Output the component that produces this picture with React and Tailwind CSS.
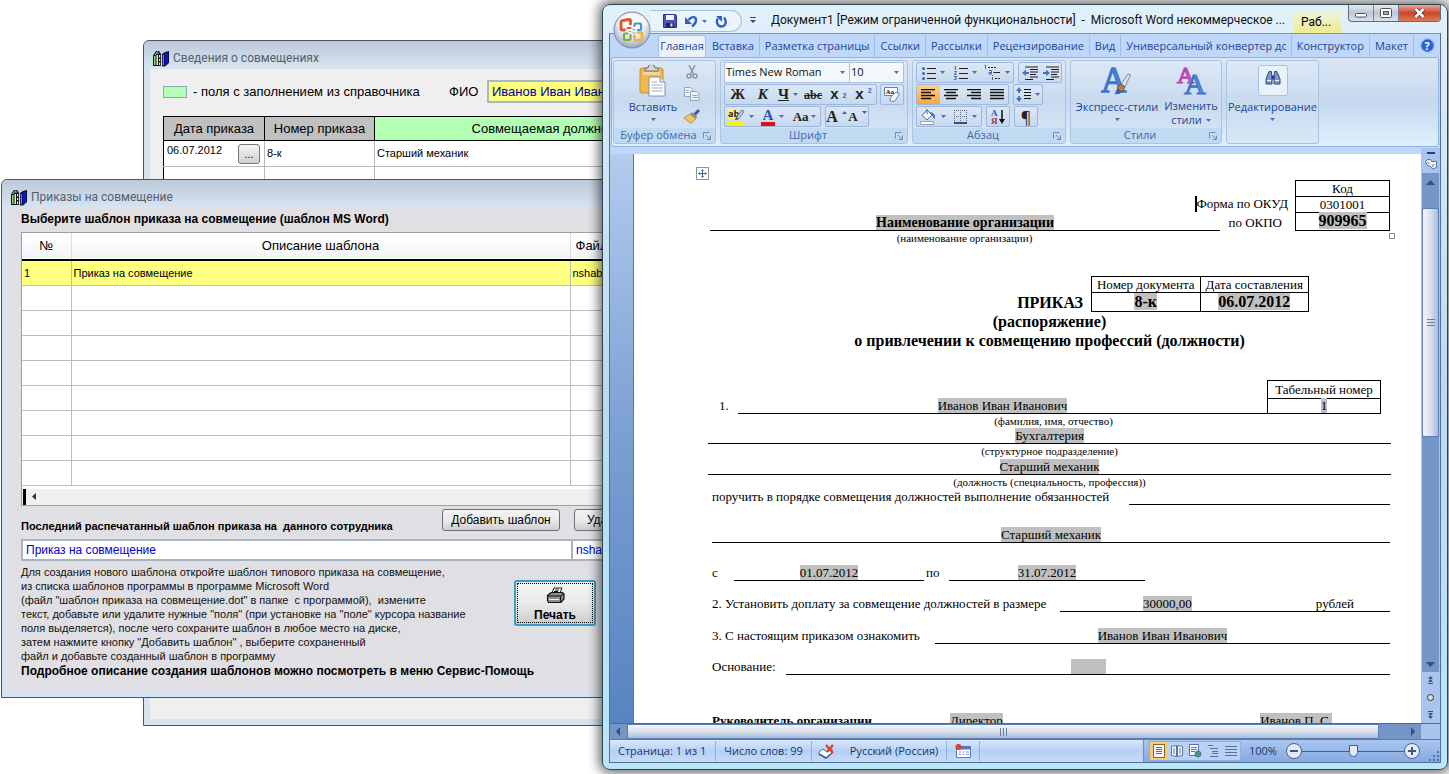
import clsx from "clsx";

const ui = "font-['Open_Sans','Noto_Sans',sans-serif]";
const caption = "font-[Roboto,'Noto_Sans',sans-serif]";
const arial = "font-['Liberation_Sans',Arial,sans-serif]";
const times = "font-['Liberation_Serif','Times_New_Roman',serif]";

const tabs = [
  "Вставка",
  "Разметка страницы",
  "Ссылки",
  "Рассылки",
  "Рецензирование",
  "Вид",
];

const help = [
  "Для создания нового шаблона откройте шаблон типового приказа на совмещение,",
  "из списка шаблонов программы в программе Microsoft Word",
  '(файл "шаблон приказа на совмещение.dot" в папке  с программой),  измените',
  'текст, добавьте или удалите нужные "поля" (при установке на "поле" курсора название',
  "поля выделяется), после чего сохраните шаблон в любое место на диске,",
  'затем нажмите кнопку "Добавить шаблон" , выберите сохраненный',
  "файл и добавьте созданный шаблон в программу",
];

/* ---------- icons ---------- */

function BooksIcon() {
  return (
    <svg width="17" height="17" viewBox="0 0 17 17">
      <path d="M1 5.500L4 1h3l2 3v12H1z" fill="#111" />
      <path d="M2 6h1.500v9H2z" fill="#7fe08a" />
      <path d="M4.500 5H6v10H4.500z" fill="#f5ef7a" />
      <path d="M7 5h1.200v2.500H7zM7 9h1.200v2H7zM7 12.500h1.200V15H7z" fill="#dfe9ff" />
      <path d="M3 5l2.500-3.500M6 4V2" stroke="#7fe0e0" strokeWidth="1" />
      <path d="M10 4l3-2 4-1v12l-4 3.500h-3z" fill="#0a0a3a" />
      <path d="M10.800 5H12v10.500h-1.200z" fill="#5d8cf0" />
      <path d="M12.800 3.500L16 2.200v10l-3.200 3z" fill="#0d12d8" />
    </svg>
  );
}

function Caret({ className = "" }) {
  return (
    <svg width="5" height="3" viewBox="0 0 5 3" className={clsx("shrink-0", className)}>
      <path d="M0 0h5L2.500 3z" fill="#4a6fae" />
    </svg>
  );
}

function OfficeLogo() {
  return (
    <svg width="38" height="38" viewBox="0 0 38 38">
      <defs>
        <radialGradient id="orb" cx="50%" cy="35%" r="65%">
          <stop offset="0" stopColor="#ffffff" />
          <stop offset="0.6" stopColor="#e2e6ef" />
          <stop offset="1" stopColor="#98a5bd" />
        </radialGradient>
      </defs>
      <circle cx="19" cy="19" r="18" fill="url(#orb)" stroke="#7b8aa6" />
      <path d="M3 14a17 17 0 0 1 32 0q-16 8-32 0z" fill="#fff" opacity="0.5" />
      <g fill="none" strokeLinejoin="round" strokeLinecap="round">
        <path d="M11.500 19H9.200q-1.200 0-1.200-1.200v-7q0-1.100 1-1.200L16 8.500q1.500 0 1.500 1.500v3" stroke="#e0562a" strokeWidth="2.800" />
        <path d="M14.500 17h3" stroke="#e0562a" strokeWidth="2.200" />
        <path d="M21.500 15v-1.500q0-1 1-1h4.500q1 0 1 1V18q0 1-1 1h-2" stroke="#3c9ad6" strokeWidth="2.200" />
        <path d="M17.500 24v4q0 1-1 1H12q-1 0-1-1v-4.500q0-1 1-1h2.500" stroke="#6fb23c" strokeWidth="2.200" />
        <path d="M25 21.500h2.800q1.200 0 1.200 1.200v5q0 1-1 1.200l-4.800.6q-1.700.2-1.700-1.300V25" stroke="#f0b52a" strokeWidth="2.600" />
        <path d="M20 18.500h2M20 22h2M17.500 20.500h-1" stroke="#8a8fa0" strokeWidth="1" />
      </g>
    </svg>
  );
}

function SaveIcon() {
  return (
    <svg width="14" height="14" viewBox="0 0 14 14">
      <path d="M.5.5h12l1 1v12H.5z" fill="#4a53b8" stroke="#2c3488" />
      <path d="M3 1h8v5H3z" fill="#eef2fb" />
      <path d="M3 9h8v4.500H3z" fill="#20285c" />
      <path d="M7.500 9.500h2v3h-2z" fill="#e4e8f5" />
    </svg>
  );
}

function UndoIcon() {
  return (
    <svg width="13" height="13" viewBox="0 0 13 13">
      <path d="M3.500 5C6 1.500 10.500 1 11 4.500c.2 3-1.500 5-4 7" fill="none" stroke="#2f5fc4" strokeWidth="2.400" />
      <path d="M0 2v7h7z" fill="#2f5fc4" />
    </svg>
  );
}

function RedoIcon() {
  return (
    <svg width="13" height="13" viewBox="0 0 13 13">
      <path d="M3 3.500C.8 6 2 11.500 6.500 11.500S12 6 9 2.500" fill="none" stroke="#2f62c8" strokeWidth="2.400" />
      <path d="M1 1h6v6z" fill="#2f62c8" />
    </svg>
  );
}

function PasteIcon() {
  return (
    <svg width="28" height="32" viewBox="0 0 28 32">
      <rect x="1" y="3" width="23" height="25" rx="2" fill="#f0b850" stroke="#c98f33" />
      <path d="M6 6V3h3a3.500 3.500 0 0 1 7 0h3v3z" fill="#d8d8d8" stroke="#6d6d6d" />
      <path d="M4 7h17v3H4z" fill="#f9d58d" />
      <path d="M10 12h11l5 5v14H10z" fill="#fff" stroke="#8291ad" />
      <path d="M21 12v5h5" fill="#dfe7f5" stroke="#8291ad" />
      <path d="M12.500 17h6M12.500 20h11M12.500 23h11M12.500 26h11" stroke="#9eabc4" />
    </svg>
  );
}

function ScissorsIcon() {
  return (
    <svg width="12" height="14" viewBox="0 0 12 14" fill="none" stroke="#8796ae" strokeWidth="1.500">
      <path d="M3 0l4.500 9M9 0L4.500 9" />
      <circle cx="3" cy="11" r="2" />
      <circle cx="9" cy="11" r="2" />
    </svg>
  );
}

function CopyIcon() {
  return (
    <svg width="16" height="14" viewBox="0 0 16 14" fill="#eef2f8" stroke="#94a4be">
      <path d="M.5.5h6l2 2v7h-8z" />
      <path d="M6.500 4.500h6l2.500 2.500v6.500H6.500z" />
      <path d="M2 3.500h3M2 5.500h3M8.500 8.500h5M8.500 10.500h5" />
    </svg>
  );
}

function BrushIcon() {
  return (
    <svg width="16" height="15" viewBox="0 0 16 15">
      <path d="M9 5l5-5 2 2-4.500 5z" fill="#4c5a9c" />
      <path d="M6 5l2-2 5.500 5-2 2z" fill="#8c8fa0" />
      <path d="M0 9l6-4 5.500 5-4.500 4.500z" fill="#edc75a" stroke="#a87b20" strokeWidth="0.7" />
    </svg>
  );
}

function EraserIcon() {
  return (
    <svg width="18" height="17" viewBox="0 0 18 17">
      <path d="M1.500 1.500h13v8h-13z" fill="#fff" stroke="#6f7f9c" />
      <text x="2.500" y="8" fontSize="7" fontWeight="bold" fill="#222">Aa</text>
      <path d="M7 12l6-6 3.500 2-5 7.500-4-.5z" fill="#f4f6fb" stroke="#6c82ab" />
    </svg>
  );
}

function HighlightIcon() {
  return (
    <svg width="17" height="18" viewBox="0 0 17 18" className={ui}>
      <path d="M0 1h9v10H0z" fill="#fff27a" />
      <text x="0" y="9" fontSize="9" fill="#222">ab</text>
      <path d="M8 10l6-8 2 1.500-6 8z" fill="#c8d4e8" stroke="#5c6f94" />
      <path d="M7 12l1-3 2.500 2z" fill="#404040" />
      <path d="M0 13.500h16v4H0z" fill="#f6f600" />
    </svg>
  );
}

function ListIcon({ kind }) {
  return (
    <svg width="14" height="14" viewBox="0 0 14 14">
      {kind === "bullets" && (
        <g fill="#3f66b0">
          <circle cx="1.500" cy="2.500" r="1.500" />
          <circle cx="1.500" cy="7.500" r="1.500" />
          <circle cx="1.500" cy="12.500" r="1.500" />
        </g>
      )}
      {kind === "numbers" && (
        <path d="M.5.500h1V4M.5 5.500h2L.5 8.500h2M0 10.500h2.500l-1 1.500 1 .5-.5 1H0" fill="none" stroke="#3f66b0" />
      )}
      <path d="M5 2.500h9M5 7.500h9M5 12.500h9" stroke="#222" />
    </svg>
  );
}

function MultiListIcon() {
  return (
    <svg width="17" height="15" viewBox="0 0 17 15">
      <path d="M.5.500h1V4M5 5.500h2.500v3.500H5V7.500h2.500M8.500 10v1M8.500 12v3" fill="none" stroke="#3f66b0" />
      <path d="M4 2.500h2M7 2.500h2M10 2.500h2M9.500 7.500H16M11 13.500h2M14 13.500h2" stroke="#222" />
    </svg>
  );
}

function IndentIcon({ flip }) {
  return (
    <svg width="16" height="14" viewBox="0 0 16 14">
      <path d="M3 1h13M8 3.500h8M8 6h8M8 8.500h6M8 11h8M3 13.500h8" stroke="#1c1c1c" />
      <path d={flip ? "M0 6h3V3.500L7 7 3 10V8H0z" : "M7 6H4V3.500L0 7l4 3V8h3z"} fill="#4573c4" />
    </svg>
  );
}

const alignPaths = {
  left: "M0 .5h14M0 3.500h10M0 6.500h14M0 9.500h10",
  center: "M0 .5h14M2 3.500h10M0 6.500h14M2 9.500h10",
  right: "M0 .5h14M4 3.500h10M0 6.500h14M4 9.500h10",
  justify: "M0 .5h14M0 3.500h14M0 6.500h14M0 9.500h14",
};

function AlignIcon({ kind }) {
  return (
    <svg width="14" height="11" viewBox="0 0 14 11">
      <path d={alignPaths[kind]} stroke="#111" strokeWidth="1.300" />
    </svg>
  );
}

function SpacingIcon() {
  return (
    <svg width="15" height="15" viewBox="0 0 15 15">
      <path d="M3 0l3 4H4v2H2V4H0zM3 15l-3-4h2V9h2v2h2z" fill="#4573c4" />
      <path d="M8 2.500h7M8 5.500h7M8 8.500h7M8 11.500h7" stroke="#111" />
    </svg>
  );
}

function BucketIcon() {
  return (
    <svg width="17" height="16" viewBox="0 0 17 16">
      <path d="M2 6.500L7 1l5 5-5 5z" fill="#f1f4fa" stroke="#4f6a9c" />
      <path d="M7 0v5" stroke="#4f6a9c" />
      <path d="M10 3q6 1 5 7-2-1-3-4z" fill="#3f6dc0" />
      <path d="M.5 12.500h13v3H.5z" fill="#fff" stroke="#8fa2c4" />
    </svg>
  );
}

function BordersIcon() {
  return (
    <svg width="14" height="14" viewBox="0 0 14 14">
      <path d="M.5 0v13M6.500 0v13M12.500 0v13M0 .5h13M0 6.500h13" stroke="#60728f" strokeDasharray="1 1" />
      <path d="M0 13h13" stroke="#222" strokeWidth="1.500" />
    </svg>
  );
}

function SortIcon() {
  return (
    <svg width="16" height="16" viewBox="0 0 16 16" className={times}>
      <text x="1" y="7" fontSize="9" fontWeight="bold" fill="#3059ae">А</text>
      <text x="1" y="15" fontSize="9" fontWeight="bold" fill="#a8323a">Я</text>
      <path d="M12 1v11" stroke="#111" strokeWidth="1.500" />
      <path d="M9 10h6l-3 5z" fill="#111" />
    </svg>
  );
}

function QuickStylesIcon() {
  return (
    <svg width="32" height="32" viewBox="0 0 32 32" className={times}>
      <text x="0" y="27" fontSize="35" fill="#4b86d6" stroke="#3a74c6" strokeWidth="1.300">A</text>
      <path d="M20 19l7-10 2.500 1-5.500 12z" fill="#dcdfe6" stroke="#6e7384" strokeWidth="0.8" />
      <path d="M16 23l4-4 4 3-3 5z" fill="#b08048" stroke="#6b4520" strokeWidth="0.8" />
      <path d="M13 29q3-1 3-6l5 4q-3 3-8 2z" fill="#2f66b4" />
    </svg>
  );
}

function ChangeStylesIcon() {
  return (
    <svg width="32" height="32" viewBox="0 0 32 32" className={times}>
      <text x="2" y="18" fontSize="24" fill="#c95cc0" stroke="#b944ac" strokeWidth="1.200">A</text>
      <text x="9" y="29" fontSize="30" fill="#5b93dd" stroke="#3a74c6" strokeWidth="1.200">A</text>
    </svg>
  );
}

function BinocularsIcon() {
  return (
    <svg width="16" height="15" viewBox="0 0 16 15" fill="#7d97c8" stroke="#27407c" strokeWidth="0.9">
      <path d="M4 1.500h2.500V4L7 6v8H1V9l2-5zM9.500 1.500H12V4l1 0 2 5v5H9V6z" />
      <path d="M7 6h2v3H7z" fill="#27407c" />
      <path d="M2 10.500h4M10 10.500h4" stroke="#fff" strokeWidth="1.200" />
    </svg>
  );
}

function PrinterIcon() {
  return (
    <svg width="19" height="17" viewBox="0 0 19 17">
      <path d="M6 6l2-5h8l-2 5z" fill="#fff" stroke="#111" />
      <path d="M9 3h4M8 4.500h4" stroke="#111" />
      <path d="M1.500 8.500L5 5.500h11.500L18 7v5l-3 3.500H2.500l-1-2z" fill="#8c8c8c" stroke="#111" strokeWidth="1.200" />
      <path d="M2 9h12.500L18 6.500M14.500 9v6" fill="none" stroke="#111" />
      <path d="M3 12.500h10" stroke="#eee" />
    </svg>
  );
}

function LauncherIcon() {
  return (
    <svg width="8" height="8" viewBox="0 0 8 8" fill="none" stroke="#6d8cc0">
      <path d="M.5 6.500v-6h6M3 3l4 4M7.500 3.500v4h-4" />
    </svg>
  );
}

function HelpIcon() {
  return (
    <svg width="15" height="15" viewBox="0 0 15 15">
      <circle cx="7.500" cy="7.500" r="6.800" fill="#2866cf" stroke="#a5c2ee" strokeWidth="1.300" />
      <text x="4.500" y="11.500" fontSize="11" fontWeight="bold" fill="#fff">?</text>
    </svg>
  );
}

function SpellIcon() {
  return (
    <svg width="18" height="16" viewBox="0 0 18 16">
      <path d="M1 9l4-3 4 3 5-3v4l-6 5-7-4z" fill="#fff" stroke="#4b6aa8" />
      <path d="M1 11l7 4 6-5" fill="none" stroke="#3c5ca4" strokeWidth="1.500" />
      <path d="M8 2l7 8M15 2L9 9" stroke="#e0402a" strokeWidth="2.200" />
    </svg>
  );
}

function MacroIcon() {
  return (
    <svg width="16" height="14" viewBox="0 0 16 14">
      <path d="M1.500 2.500h14v11h-14z" fill="#fff" stroke="#5b79b4" />
      <path d="M2 3h13v2.500H2z" fill="#4a78cc" />
      <path d="M4 8h2M7.500 8h2M11 8h3M4 10.500h2M7.500 10.500h2M11 10.500h3" stroke="#7c93bd" />
      <circle cx="3.500" cy="3" r="3" fill="#d9432c" />
    </svg>
  );
}

/* ---------- program windows on the left ---------- */

function FormWindow({ title, className, bodyClass, children }) {
  return (
    <section
      className={clsx(
        "absolute flex flex-col rounded-t-md border border-[#4c5560] bg-[#d6e3f0] px-[6px] pb-[6px]",
        className
      )}
    >
      <header className={clsx("-mx-[6px] flex h-7 shrink-0 items-center gap-1 rounded-t-md bg-linear-to-b from-[#bccad9] to-[#d7e4f2] px-2 pt-[6px] text-[12px] text-[#56606b]", caption)}>
        <BooksIcon />
        <h2>{title}</h2>
      </header>
      <div className={clsx("min-h-0 flex-1", arial, bodyClass)}>{children}</div>
    </section>
  );
}

function CombinationsWindow() {
  return (
    <FormWindow
      title="Сведения о совмещениях"
      className="top-10 left-[143px] h-[686px] w-[700px]"
      bodyClass="bg-[#efefef] pl-[13px] pt-[11px]"
    >
      <div className="flex items-center text-[13px]">
        <span className="h-3 w-6 border border-[#8fa9bd] bg-[#b3ffb3]" />
        <span className="ml-[6px] w-[256px] whitespace-nowrap">- поля с заполнением из справочника</span>
        <label htmlFor="fio" className="w-[38px]">ФИО</label>
        <input
          id="fio"
          defaultValue="Иванов Иван Иванович"
          className="h-[23px] w-[300px] border-2 border-[#a8b8c8] bg-[#ffff80] px-[3px] text-[#00009c] outline-none"
        />
      </div>
      <table className="mt-[13px] w-[562px] table-fixed border-collapse border border-black bg-white text-[11px]">
        <colgroup>
          <col className="w-[101px]" />
          <col className="w-[110px]" />
          <col />
        </colgroup>
        <thead>
          <tr className="h-6 text-[13px]">
            <th className="border border-black bg-[#c0c0c0] font-normal">Дата приказа</th>
            <th className="border border-black bg-[#c0c0c0] font-normal">Номер приказа</th>
            <th className="border border-black bg-[#b3ffb3] font-normal">Совмещаемая должность</th>
          </tr>
        </thead>
        <tbody>
          <tr className="h-[26px]">
            <td className="border border-t-black border-[#b8b8b8] border-l-black pl-[3px]">
              <div className="flex items-center justify-between pr-1">
                <span className="pb-[6px]">06.07.2012</span>
                <button className="h-5 w-[22px] rounded-[3px] border border-[#777] bg-linear-to-b from-[#f4f4f4] to-[#d2d2d2] leading-3">
                  ...
                </button>
              </div>
            </td>
            <td className="border border-t-black border-[#b8b8b8] px-[2px]">8-к</td>
            <td className="border border-t-black border-[#b8b8b8] px-[2px]">Старший механик</td>
          </tr>
          {[1, 2, 3].map((i) => (
            <tr key={i} className="h-[26px]">
              <td className="border border-[#b8b8b8] border-l-black" />
              <td className="border border-[#b8b8b8]" />
              <td className="border border-[#b8b8b8]" />
            </tr>
          ))}
        </tbody>
      </table>
    </FormWindow>
  );
}

function FormButton({ className, children }) {
  return (
    <button
      className={clsx(
        "rounded-[3px] border border-[#707070] bg-linear-to-b from-[#f3f3f3] via-[#ebebeb] to-[#cfcfcf] whitespace-nowrap",
        className
      )}
    >
      {children}
    </button>
  );
}

function OrdersWindow() {
  return (
    <FormWindow
      title="Приказы на совмещение"
      className="top-[179px] left-px h-[519px] w-[740px]"
      bodyClass="flex flex-col bg-[#e0dfe3] pl-[13px]"
    >
      <p className="h-6 text-[12px] leading-[22px] font-bold">Выберите шаблон приказа на совмещение (шаблон MS Word)</p>
      <div className="w-[690px] border border-[#a0a0a0] bg-white">
        <table className="w-full table-fixed border-collapse text-[11px]">
          <colgroup>
            <col className="w-[49px]" />
            <col className="w-[499px]" />
            <col />
          </colgroup>
          <thead>
            <tr className="h-[27px] border-b-2 border-black bg-linear-to-b from-white to-[#f2f4f6] text-[13px]">
              <th className="border-r border-[#dcdcdc] font-normal">№</th>
              <th className="border-r border-[#dcdcdc] font-normal">Описание шаблона</th>
              <th className="pl-[5px] text-left font-normal">Файл</th>
            </tr>
          </thead>
          <tbody>
            <tr className="h-[25px] bg-[#ffff80]">
              <td className="border-r border-b border-[#bdbdbd] px-[2px]">1</td>
              <td className="border-r border-b border-[#bdbdbd] px-[2px]">Приказ на совмещение</td>
              <td className="border-b border-[#bdbdbd] px-[2px]">nshablon.dot</td>
            </tr>
            {[1, 2, 3, 4, 5, 6, 7, 8].map((i) => (
              <tr key={i} className="h-[25px]">
                <td className="border-r border-b border-[#bdbdbd]" />
                <td className="border-r border-b border-[#bdbdbd]" />
                <td className="border-b border-[#bdbdbd]" />
              </tr>
            ))}
          </tbody>
        </table>
        <div className="mt-[3px] flex h-4 items-center gap-[6px] bg-[#efefef] pl-px">
          <span className="h-4 w-[3px] bg-black" />
          <svg width="5" height="7" viewBox="0 0 5 7">
            <path d="M4 0v7L0 3.500z" fill="#333" />
          </svg>
        </div>
      </div>

      <div className="mt-[3px] flex h-[30px] text-[12px]">
        <label htmlFor="last" className="w-[421px] self-end pb-1 text-[11px] font-bold whitespace-pre">
          Последний распечатанный шаблон приказа на  данного сотрудника
        </label>
        <FormButton className="h-[22px] w-[118px]">Добавить шаблон</FormButton>
        <FormButton className="ml-[14px] h-[22px] w-[118px]">Удалить шаблон</FormButton>
      </div>
      <div className="flex text-[12px] text-[#0000d0]">
        <input id="last" defaultValue="Приказ на совмещение" className="h-[22px] w-[552px] border-2 border-[#a8b4c0] bg-white px-[3px] outline-none" />
        <input aria-label="Файл" defaultValue="nshablon.dot" className="h-[22px] w-[138px] border-2 border-l-0 border-[#a8b4c0] bg-white px-[3px] outline-none" />
      </div>
      <div className="mt-1 flex">
        <div className="w-[493px] text-[11px] leading-[14px] whitespace-pre text-[#111]">
          {help.map((line) => (
            <p key={line}>{line}</p>
          ))}
        </div>
        <button className="mt-[15px] flex h-[46px] w-[82px] flex-col items-center justify-between rounded-[3px] border-2 border-[#3c9cc4] bg-linear-to-b from-[#f4f4f4] via-[#ebebeb] to-[#cdcdcd] p-px text-[12px] leading-[14px] font-bold">
          <span className="flex size-full flex-col items-center justify-between border border-dotted border-black pt-[3px]">
            <PrinterIcon />
            Печать
          </span>
        </button>
      </div>
      <p className="text-[12px] leading-4 font-bold whitespace-nowrap">
        Подробное описание создания шаблонов можно посмотреть в меню Сервис-Помощь
      </p>
    </FormWindow>
  );
}

/* ---------- Word ---------- */

function TitleBar() {
  return (
    <header className={clsx("flex h-7 shrink-0 items-start", caption)}>
      <button aria-label="Office" className="relative z-10 ml-1 mt-[6px] size-[38px] shrink-0">
        <OfficeLogo />
      </button>
      <div className="mt-[5px] flex h-[22px] w-[91px] shrink-0 items-center gap-2 rounded-r-full border border-l-0 border-[#a9bfd9] bg-white/30 pl-3">
        <button aria-label="Сохранить"><SaveIcon /></button>
        <button aria-label="Отменить" className="flex items-center gap-1"><UndoIcon /><Caret /></button>
        <button aria-label="Повторить"><RedoIcon /></button>
      </div>
      <svg width="6" height="7" viewBox="0 0 6 7" className="mt-3 ml-2 shrink-0">
        <path d="M0 .5h6" stroke="#2c4680" />
        <path d="M0 3h6L3 6z" fill="#2c4680" />
      </svg>
      <h1 className="mt-[5px] ml-[15px] min-w-0 flex-1 text-[12px] leading-5 whitespace-pre text-[#111]">
        Документ1 [Режим ограниченной функциональности]  -  Microsoft Word некоммерческое ...
      </h1>
      <span className="mt-[5px] h-[23px] w-[47px] shrink-0 bg-linear-to-b from-[#eef4e4] to-[#f0e98c] pl-[7px] text-[12px] leading-6">
        Раб...
      </span>
      <div className="ml-[7px] flex h-[17px] shrink-0 overflow-hidden rounded-b-[4px] border border-t-0 border-[#5f6c7c] bg-linear-to-b from-[#e6ebf2] via-[#bcc6d4] to-[#dae2ec]">
        <button aria-label="Свернуть" className="flex w-[25px] items-center justify-center border-r border-[#77839a] pt-1">
          <svg width="12" height="5" viewBox="0 0 12 5"><rect x=".5" y=".5" width="11" height="3.500" rx="1" fill="#fff" stroke="#555" /></svg>
        </button>
        <button aria-label="Развернуть" className="flex w-[25px] items-center justify-center border-r border-[#77839a]">
          <svg width="12" height="10" viewBox="0 0 12 10"><rect x=".5" y=".5" width="11" height="9" rx="1" fill="#fff" stroke="#555" /><rect x="3.500" y="3.500" width="5" height="3" fill="#aab" stroke="#555" /></svg>
        </button>
        <button aria-label="Закрыть" className="flex w-[41px] items-center justify-center bg-linear-to-b from-[#e9a694] via-[#c8442c] to-[#dc7a58]">
          <svg width="13" height="10" viewBox="0 0 13 10"><path d="M2.500 1l8 8M10.500 1l-8 8" stroke="#5c3030" strokeWidth="4" /><path d="M2.500 1l8 8M10.500 1l-8 8" stroke="#fff" strokeWidth="2.500" /></svg>
        </button>
      </div>
    </header>
  );
}

function RibbonTab({ className, children }) {
  return (
    <button className={clsx("h-[22px] overflow-hidden border-r border-[#a3bde3] whitespace-nowrap", className)}>
      {children}
    </button>
  );
}

function RibbonTabs() {
  return (
    <nav className="flex h-6 items-end overflow-hidden border-t border-[#7a95bd] bg-[#bfd7fa] text-[11px] text-[#1f4591]">
      <button className="mr-px ml-12 h-[22px] w-12 shrink-0 rounded-t-[3px] border border-b-0 border-[#a5bfe3] bg-[#eaf1fb]">
        Главная
      </button>
      {tabs.map((t) => (
        <RibbonTab key={t} className="px-[5px]">{t}</RibbonTab>
      ))}
      <RibbonTab className="min-w-0 flex-1 px-[5px] text-left">
        <span className="block overflow-hidden">Универсальный конвертер документов</span>
      </RibbonTab>
      <RibbonTab className="px-[5px]">Конструктор</RibbonTab>
      <RibbonTab className="px-[5px]">Макет</RibbonTab>
      <button aria-label="Справка" className="flex h-6 w-[26px] shrink-0 items-center justify-center"><HelpIcon /></button>
    </nav>
  );
}

function Group({ title, className, launcher = true, children }) {
  return (
    <div className={clsx("flex shrink-0 flex-col overflow-hidden rounded-[3px] border border-[#a9c3e2] bg-linear-to-b from-[#dce8f6] via-[#c9daef] to-[#d9e8f8]", className)}>
      <div className="min-h-0 flex-1">{children}</div>
      {title && (
        <div className="flex h-[15px] items-center bg-[#c1d9f1] pr-1 text-[#3e6aaa]">
          <span className="flex-1 text-center">{title}</span>
          {launcher && <button aria-label={title}><LauncherIcon /></button>}
        </div>
      )}
    </div>
  );
}

function Tools({ className, children }) {
  return (
    <div className={clsx("flex h-[21px] items-stretch overflow-hidden rounded-[2px] border border-[#9db8dc] bg-linear-to-b from-[#dbe7f5] to-[#c7d9ef]", className)}>
      {children}
    </div>
  );
}

function Tool({ label, active, menu, className, children }) {
  return (
    <button
      aria-label={label}
      className={clsx(
        "flex flex-1 items-center justify-center gap-1 text-[#222]",
        active && "bg-linear-to-b from-[#fbd08b] to-[#fba63c]",
        className
      )}
    >
      {children}
      {menu && <Caret />}
    </button>
  );
}

function FontSelect({ label, value, className }) {
  return (
    <div className={clsx("relative border border-[#abc1de] bg-[#f4f8fd]", className)}>
      <select aria-label={label} className="h-[19px] w-full appearance-none bg-transparent pl-px text-[11px] text-[#111] outline-none">
        <option>{value}</option>
      </select>
      <Caret className="pointer-events-none absolute top-2 right-1" />
    </div>
  );
}

function GrowMark({ down }) {
  return (
    <svg width="5" height="3" viewBox="0 0 5 3" className="mb-2">
      <path d={down ? "M0 0h5L2.500 3z" : "M0 3h5L2.500 0z"} fill="#3565b8" />
    </svg>
  );
}

function Ribbon() {
  return (
    <div className="mx-px flex h-[90px] gap-1 rounded-[3px] border border-[#8db2e3] bg-linear-to-b from-[#dbe6f4] via-[#c6d8ee] to-[#dff0fc] py-[2px] pl-px text-[11px] text-[#1f4591]">
      <Group title="Буфер обмена" className="w-[103px]">
        <div className="flex">
          <button className="flex w-[66px] flex-col items-center pt-1 pl-3">
            <PasteIcon />
            <span className="leading-5">Вставить</span>
            <Caret className="mt-px" />
          </button>
          <div className="flex flex-col items-center gap-2 pt-1 pl-1">
            <button aria-label="Вырезать"><ScissorsIcon /></button>
            <button aria-label="Копировать"><CopyIcon /></button>
            <button aria-label="Формат по образцу"><BrushIcon /></button>
          </div>
        </div>
      </Group>

      <Group title="Шрифт" className="w-[188px]">
        <div className="flex flex-col gap-px px-[3px] pt-px">
          <div className="flex">
            <FontSelect label="Шрифт" value="Times New Roman" className="w-[126px]" />
            <FontSelect label="Размер" value="10" className="flex-1 border-l-0" />
          </div>
          <div className="flex justify-between font-['Liberation_Serif',serif] text-[15px] font-bold">
            <Tools className="w-[153px]">
              <Tool label="Полужирный">Ж</Tool>
              <Tool label="Курсив" className="italic">К</Tool>
              <Tool label="Подчеркнутый" menu className="w-4"><u>Ч</u></Tool>
              <Tool label="Зачеркнутый" className="text-[12px]"><s>abc</s></Tool>
              <Tool label="Подстрочный" className="gap-0 font-['Liberation_Sans',sans-serif]">x<sub className="text-[7px] text-[#3565b8]">2</sub></Tool>
              <Tool label="Надстрочный" className="gap-0 font-['Liberation_Sans',sans-serif]">x<sup className="text-[7px] text-[#3565b8]">2</sup></Tool>
            </Tools>
            <Tools className="w-6"><Tool label="Очистить формат"><EraserIcon /></Tool></Tools>
          </div>
          <div className="flex gap-1 font-['Liberation_Serif',serif] text-[15px] font-bold">
            <Tools className="w-[97px]">
              <Tool label="Выделение" menu><HighlightIcon /></Tool>
              <Tool label="Цвет текста" menu>
                <span className="h-[18px] border-b-4 border-[#e01010] px-[2px] leading-[14px] text-[#2c55a4]">A</span>
              </Tool>
              <Tool label="Регистр" menu className="gap-[2px] text-[13px]">Aa</Tool>
            </Tools>
            <Tools className="w-11">
              <Tool label="Увеличить" className="gap-0 text-[16px]">A<GrowMark /></Tool>
              <Tool label="Уменьшить" className="gap-0 text-[13px]">A<GrowMark down /></Tool>
            </Tools>
          </div>
        </div>
      </Group>

      <Group title="Абзац" className="w-[154px]">
        <div className="flex flex-col gap-px px-[3px] pt-px">
          <div className="flex gap-1">
            <Tools className="w-[98px]">
              <Tool label="Маркеры" menu><ListIcon kind="bullets" /></Tool>
              <Tool label="Нумерация" menu><ListIcon kind="numbers" /></Tool>
              <Tool label="Многоуровневый список" menu className="gap-0"><MultiListIcon /></Tool>
            </Tools>
            <Tools className="w-11">
              <Tool label="Уменьшить отступ"><IndentIcon /></Tool>
              <Tool label="Увеличить отступ"><IndentIcon flip /></Tool>
            </Tools>
          </div>
          <div className="flex gap-1">
            <Tools className="w-[93px]">
              <Tool label="По левому краю" active><AlignIcon kind="left" /></Tool>
              <Tool label="По центру"><AlignIcon kind="center" /></Tool>
              <Tool label="По правому краю"><AlignIcon kind="right" /></Tool>
              <Tool label="По ширине"><AlignIcon kind="justify" /></Tool>
            </Tools>
            <Tools className="w-[30px]"><Tool label="Интервал" menu><SpacingIcon /></Tool></Tools>
          </div>
          <div className="flex gap-1">
            <Tools className="w-[66px]">
              <Tool label="Заливка" menu><BucketIcon /></Tool>
              <Tool label="Границы" menu><BordersIcon /></Tool>
            </Tools>
            <Tools className="w-6"><Tool label="Сортировка"><SortIcon /></Tool></Tools>
            <Tools className="w-6"><Tool label="Знаки абзаца" className="text-[16px]">¶</Tool></Tools>
          </div>
        </div>
      </Group>

      <Group title="Стили" className="w-[152px]">
        <div className="flex justify-center gap-1 whitespace-nowrap">
          <button className="flex w-[86px] flex-col items-center pt-1">
            <QuickStylesIcon />
            <span className="leading-5">Экспресс-стили</span>
            <Caret className="mt-px" />
          </button>
          <button className="flex w-[54px] flex-col items-center pt-1">
            <ChangeStylesIcon />
            <span className="pt-[2px] leading-[14px]">Изменить</span>
            <span className="flex items-center gap-1 leading-[14px]">стили <Caret /></span>
          </button>
        </div>
      </Group>

      <Group className="w-[93px] border-[#8ab4dc]">
        <button className="flex w-full flex-col items-center pt-1">
          <span className="flex h-[31px] w-[30px] justify-center rounded-[3px] border border-[#a9c1e2] bg-[#e9f1fb] pt-1"><BinocularsIcon /></span>
          <span className="pt-px leading-5">Редактирование</span>
          <Caret className="mt-px" />
        </button>
      </Group>
    </div>
  );
}

/* a merge field */
function Field({ className, children }) {
  return <span className={clsx("bg-[#c0c0c0]", className)}>{children}</span>;
}

function Rule({ className, children }) {
  return (
    <div className={clsx("flex items-end justify-center border-b border-black leading-[15px]", className || "h-4")}>
      {children}
    </div>
  );
}

function Caption({ className, children }) {
  return <p className={clsx("h-[14px] text-center text-[11px] leading-[14px]", className)}>{children}</p>;
}

const cell = "border border-black p-0 text-center font-normal leading-[14px]";

function DocumentPage() {
  return (
    <article className={clsx("relative min-w-0 flex-1 overflow-hidden border-l border-[#5c7598] bg-white pl-[74px] pr-[30px] text-[13px] whitespace-nowrap text-black", times)}>
      <span className="absolute top-[13px] left-[62px] flex size-[13px] items-center justify-center border border-[#8a93a8] bg-white">
        <svg width="9" height="9" viewBox="0 0 9 9">
          <path d="M4.500 1v7M1 4.500h7" stroke="#3c62b4" />
          <path d="M4.500 0L6 2H3zM4.500 9L3 7h3zM0 4.500L2 3v3zM9 4.500L7 6V3z" fill="#3c62b4" />
        </svg>
      </span>

      <div className="flex pt-[26px]">
        <div className="flex min-w-0 flex-1 items-end pl-[2px]">
          <Rule className="h-4 flex-1">
            <Field className="text-[14px] font-bold">Наименование организации</Field>
          </Rule>
        </div>
        <div className="flex w-[75px] flex-col items-end justify-end pr-[7px]">
          <span className="border-l-2 border-black leading-4">Форма по ОКУД</span>
          <span className="pt-[3px] pr-[6px] leading-4">по ОКПО</span>
        </div>
        <table className="mr-px w-[95px] border-collapse">
          <tbody>
            <tr className="h-4"><th className={cell}>Код</th></tr>
            <tr className="h-4"><td className={cell}>0301001</td></tr>
            <tr className="h-[18px]"><td className={cell}><Field className="text-[16px] font-bold">909965</Field></td></tr>
          </tbody>
        </table>
      </div>
      <span className="absolute top-[79px] right-[26px] size-[6px] border border-[#8a8a8a]" />
      <Caption className="mr-[170px]">(наименование организации)</Caption>

      <div className="mt-[31px] flex items-end justify-end pr-[82px]">
        <strong className="pr-2 text-[16px] leading-[18px]">ПРИКАЗ</strong>
        <table className="w-[218px] table-fixed border-collapse">
          <tbody>
            <tr className="h-4">
              <th className={cell}>Номер документа</th>
              <th className={cell}>Дата составления</th>
            </tr>
            <tr className="h-[19px]">
              <td className={cell}><Field className="text-[16px] font-bold">8-к</Field></td>
              <td className={cell}><Field className="text-[16px] font-bold">06.07.2012</Field></td>
            </tr>
          </tbody>
        </table>
      </div>
      <h3 className="text-center text-[16px] leading-[19px] font-bold">
        (распоряжение)
        <br />о привлечении к совмещению профессий (должности)
      </h3>

      <div className="mt-[30px] flex items-end pr-[10px] pl-[11px]">
        <span className="w-[19px] leading-4">1.</span>
        <Rule className="h-4 flex-1"><Field>Иванов Иван Иванович</Field></Rule>
        <table className="w-[114px] border-collapse">
          <tbody>
            <tr className="h-[18px]"><th className={cell}>Табельный номер</th></tr>
            <tr className="h-[15px]"><td className={cell}><Field>1</Field></td></tr>
          </tbody>
        </table>
      </div>
      <Caption className="pl-2">(фамилия, имя, отчество)</Caption>
      <Rule><Field>Бухгалтерия</Field></Rule>
      <Caption>(структурное подразделение)</Caption>
      <Rule className="h-[17px]"><Field>Старший механик</Field></Rule>
      <Caption>(должность (специальность, профессия))</Caption>

      <div className="flex flex-col pr-px pl-1">
        <div className="flex h-4 gap-2">
          <span className="w-[409px] leading-4">поручить в порядке совмещения должностей выполнение обязанностей</span>
          <Rule className="flex-1" />
        </div>
        <Rule className="mt-[22px] h-4"><Field>Старший механик</Field></Rule>
        <div className="mt-[22px] flex leading-4">
          <span className="w-[22px]">с</span>
          <Rule className="h-4 w-[190px]"><Field>01.07.2012</Field></Rule>
          <span className="w-[25px] pl-[2px]">по</span>
          <Rule className="h-4 w-[196px]"><Field>31.07.2012</Field></Rule>
        </div>
        <div className="mt-[15px] flex gap-1 leading-4">
          <span className="w-[344px]">2. Установить доплату за совмещение должностей в размере</span>
          <Rule className="h-4 flex-1 pr-9 pl-[83px]">
            <Field className="mr-auto">30000,00</Field>
            <span>рублей</span>
          </Rule>
        </div>
        <div className="mt-4 flex gap-2 leading-4">
          <span className="w-[215px]">3. С настоящим приказом ознакомить</span>
          <Rule className="h-4 flex-1"><Field>Иванов Иван Иванович</Field></Rule>
        </div>
        <div className="mt-[15px] flex gap-2 leading-4">
          <span className="w-[66px]">Основание:</span>
          <Rule className="h-4 flex-1"><Field className="h-[15px] w-[35px]" /></Rule>
        </div>
        <div className="mt-[38px] flex leading-4">
          <strong className="w-[238px]">Руководитель организации</strong>
          <Field className="mr-auto">Директор</Field>
          <Field className="mr-[58px]">Иванов П. С.</Field>
        </div>
      </div>
    </article>
  );
}

function Arrow({ d, label, className }) {
  return (
    <button aria-label={label} className={clsx("flex shrink-0 items-center justify-center", className)}>
      <svg width="9" height="9" viewBox="0 0 9 9"><path d={d} fill="#35507f" /></svg>
    </button>
  );
}

function VerticalScroll() {
  return (
    <div className="-mt-[6px] flex w-[19px] shrink-0 flex-col items-center bg-[#a9c5ef] px-px">
      <span className="mt-1 h-[2px] w-2 shrink-0 bg-[#27406e]" />
      <svg width="12" height="12" viewBox="0 0 12 12" className="mt-1 mb-[3px] shrink-0">
        <path d="M.5 3.500l2-2h3l1 2h5v6l-4 1.500-2-2.500-3-1z" fill="#f2f2fa" stroke="#5b6f9c" />
        <path d="M2.500 4.500l2 1M7 9l2-3" stroke="#5b6f9c" />
      </svg>
      <div className="flex min-h-0 w-full flex-1 flex-col bg-[#7395c8]">
        <Arrow label="Вверх" d="M4.500 2L9 7H0z" className="h-[18px]" />
        <div className="mt-[17px] flex h-[229px] flex-col items-center justify-center gap-[2px] rounded-[2px] border border-[#5b7db2] bg-linear-to-r from-[#f3f6fb] via-[#d8e1ee] to-[#a9bdd9]">
          <span className="h-px w-2 bg-[#6b7c98]" />
          <span className="h-px w-2 bg-[#6b7c98]" />
          <span className="h-px w-2 bg-[#6b7c98]" />
        </div>
        <Arrow label="Вниз" d="M0 2h9L4.500 7z" className="mt-auto h-4" />
      </div>
      <Arrow label="Предыдущая" d="M4.500 0L7 3H2zM4.500 3L7 6H2zM2 7h5v1H2z" className="h-[17px]" />
      <button aria-label="Объект перехода" className="my-[5px] size-[7px] shrink-0 rounded-full border border-[#333] bg-[#ddd]" />
      <Arrow label="Следующая" d="M2 1h5v1H2zM2 3h5L4.500 6zM2 6h5L4.500 9z" className="h-[17px]" />
    </div>
  );
}

function HorizontalScroll() {
  return (
    <div className="flex h-4 shrink-0 border-t border-[#4569a5] bg-[#7395c8]">
      <Arrow label="Влево" d="M6 0v9L2 4.500z" className="w-[17px]" />
      <div className="flex min-w-0 flex-1 items-center justify-center gap-[2px] border border-[#5b7db2] bg-linear-to-b from-[#f3f6fb] via-[#d8e1ee] to-[#a9bdd9]">
        <span className="h-2 w-px bg-[#6b7c98]" />
        <span className="h-2 w-px bg-[#6b7c98]" />
        <span className="h-2 w-px bg-[#6b7c98]" />
      </div>
      <Arrow label="Вправо" d="M3 0l4 4.500L3 9z" className="ml-[25px] w-[17px]" />
      <span className="w-[19px] bg-[#a9c5ef]" />
    </div>
  );
}

const views = [
  { label: "Разметка страницы", d: "M1.500.5h11v13h-11zM4 3.500h6M4 5.500h6M4 7.500h6M4 9.500h6" },
  { label: "Чтение", d: "M1.500 2.500l5-1v11l-5-1zM12.500 2.500l-5-1v11l5-1zM3 5h2M3 7h2M3 9h2M9 5h2M9 7h2M9 9h2" },
  { label: "Веб-документ", d: "M1.500.5h9v11h-9zM3 3.500h6M3 5.500h6M3 7.500h4" },
  { label: "Структура", d: "M2 1.500h5M4 4.500h8M6 7.500h6M6 9.500h6M4 12.500h8" },
  { label: "Черновик", d: "M1 2.500h12M1 5.500h12M1 8.500h12M1 11.500h12" },
];

function StatusBar() {
  return (
    <footer className="flex h-[23px] shrink-0 items-center border-t border-[#567db1] bg-linear-to-b from-[#d9e8fb] via-[#b5d0f5] to-[#c6dcf8] text-[11px] leading-5 whitespace-nowrap text-[#1a3668]">
      <span className="border-r border-[#92b1dd] pr-[9px] pl-2">Страница: 1 из 1</span>
      <span className="border-r border-[#92b1dd] px-2">Число слов: 99</span>
      <button aria-label="Правописание" className="px-[6px]"><SpellIcon /></button>
      <span className="border-r border-[#92b1dd] px-2">Русский (Россия)</span>
      <button aria-label="Макрос" className="flex h-5 items-center border-r border-[#92b1dd] px-2"><MacroIcon /></button>
      <div className="ml-auto flex h-[22px] items-center border-l border-[#6b90c4] bg-linear-to-b from-[#a9c6ef] to-[#86aade] pl-[5px]">
        <div className="flex h-5 border border-[#8fb0dc] bg-[#b9d2f4]">
          {views.map((v, i) => (
            <button key={v.label} aria-label={v.label} className={clsx("flex w-[18px] items-center justify-center", i === 0 && "bg-[#fbc873]")}>
              <svg width="14" height="14" viewBox="0 0 14 14" fill={i < 3 ? "#f6f8fc" : "none"} stroke={i === 0 ? "#6a5a30" : "#4c6698"} strokeWidth="0.9">
                <path d={v.d} />
                {i === 2 && <circle cx="10" cy="10" r="3" fill="#3f9a86" />}
              </svg>
            </button>
          ))}
        </div>
        <span className="w-[45px] pl-2">100%</span>
        <button aria-label="Уменьшить масштаб" className="flex size-4 items-center justify-center rounded-full border border-[#45629a] bg-[#e3ebf8]">
          <span className="h-[2px] w-2 bg-[#45567c]" />
        </button>
        <input
          type="range"
          aria-label="Масштаб"
          defaultValue="50"
          className="h-4 w-[102px] appearance-none bg-[linear-gradient(#3f5f98,#3f5f98)] bg-[length:100%_1px] bg-center bg-no-repeat [&::-webkit-slider-thumb]:h-3 [&::-webkit-slider-thumb]:w-[9px] [&::-webkit-slider-thumb]:appearance-none [&::-webkit-slider-thumb]:rounded-b-full [&::-webkit-slider-thumb]:border [&::-webkit-slider-thumb]:border-[#3f5f98] [&::-webkit-slider-thumb]:bg-[#e3ebf8]"
        />
        <button aria-label="Увеличить масштаб" className="flex size-4 items-center justify-center rounded-full border border-[#45629a] bg-[#e3ebf8]">
          <svg width="8" height="8" viewBox="0 0 8 8"><path d="M4 0v8M0 4h8" stroke="#45567c" strokeWidth="2" /></svg>
        </button>
        <svg width="12" height="12" viewBox="0 0 12 12" className="ml-2 self-end" fill="#4d73b0">
          <path d="M9 1h2v2H9zM5 5h2v2H5zM9 5h2v2H9zM1 9h2v2H1zM5 9h2v2H5zM9 9h2v2H9z" />
        </svg>
      </div>
    </footer>
  );
}

function WordWindow() {
  return (
    <section
      className={clsx(
        "absolute top-1 right-px bottom-1 left-[602px] flex flex-col rounded-lg border border-[#2c4652] bg-linear-to-b from-[#e2f0fa] via-[#bcd9ef] to-[#b9e6f8] px-[6px] pb-[6px] shadow-[0_0_12px_3px_rgba(0,0,0,0.6)]",
        ui
      )}
    >
      <TitleBar />
      <div className="flex min-h-0 flex-1 flex-col border border-t-0 border-[#4f6f98] bg-[#bfd7fa]">
        <RibbonTabs />
        <Ribbon />
        <div className="mt-[7px] flex min-h-0 flex-1">
          <div className="w-[23px] shrink-0 bg-linear-to-b from-[#b3ccee] via-[#7a9fd2] to-[#5784c2]" />
          <DocumentPage />
          <VerticalScroll />
        </div>
        <HorizontalScroll />
        <StatusBar />
      </div>
    </section>
  );
}

export default function App() {
  return (
    <main className="relative h-screen overflow-hidden bg-white">
      <CombinationsWindow />
      <OrdersWindow />
      <WordWindow />
    </main>
  );
}
